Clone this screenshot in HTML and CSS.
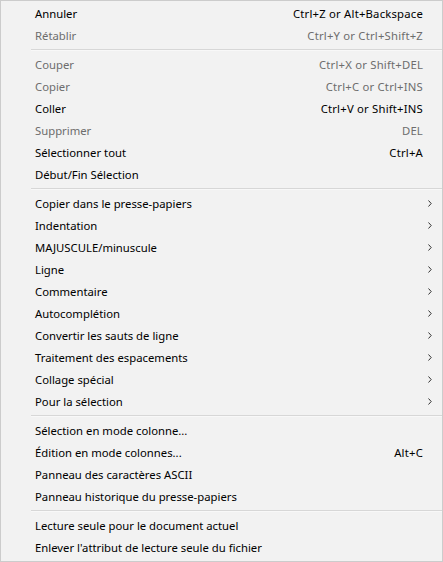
FILE: index.html
```html
<!DOCTYPE html>
<html lang="fr">
<head>
<meta charset="utf-8">
<title>Menu</title>
<link rel="stylesheet" href="styles.css">
</head>
<body>
<div class="menu">
  <div class="item"><span class="label">Annuler</span><span class="key">Ctrl+Z or Alt+Backspace</span><span class="arr"></span></div>
  <div class="item off"><span class="label">Rétablir</span><span class="key">Ctrl+Y or Ctrl+Shift+Z</span><span class="arr"></span></div>
  <div class="sep"></div>
  <div class="item off"><span class="label">Couper</span><span class="key">Ctrl+X or Shift+DEL</span><span class="arr"></span></div>
  <div class="item off"><span class="label">Copier</span><span class="key">Ctrl+C or Ctrl+INS</span><span class="arr"></span></div>
  <div class="item"><span class="label">Coller</span><span class="key">Ctrl+V or Shift+INS</span><span class="arr"></span></div>
  <div class="item off"><span class="label">Supprimer</span><span class="key">DEL</span><span class="arr"></span></div>
  <div class="item"><span class="label">Sélectionner tout</span><span class="key">Ctrl+A</span><span class="arr"></span></div>
  <div class="item"><span class="label">Début/Fin Sélection</span><span class="key"></span><span class="arr"></span></div>
  <div class="sep"></div>
  <div class="item"><span class="label">Copier dans le presse-papiers</span><span class="key"></span><span class="arr"><svg viewBox="0 0 4 7" width="4" height="7"><path d="M0.5 0.5 L3.2 3.5 L0.5 6.5" fill="none" stroke="#333" stroke-width="1"/></svg></span></div>
  <div class="item"><span class="label">Indentation</span><span class="key"></span><span class="arr"><svg viewBox="0 0 4 7" width="4" height="7"><path d="M0.5 0.5 L3.2 3.5 L0.5 6.5" fill="none" stroke="#333" stroke-width="1"/></svg></span></div>
  <div class="item"><span class="label">MAJUSCULE/minuscule</span><span class="key"></span><span class="arr"><svg viewBox="0 0 4 7" width="4" height="7"><path d="M0.5 0.5 L3.2 3.5 L0.5 6.5" fill="none" stroke="#333" stroke-width="1"/></svg></span></div>
  <div class="item"><span class="label">Ligne</span><span class="key"></span><span class="arr"><svg viewBox="0 0 4 7" width="4" height="7"><path d="M0.5 0.5 L3.2 3.5 L0.5 6.5" fill="none" stroke="#333" stroke-width="1"/></svg></span></div>
  <div class="item"><span class="label">Commentaire</span><span class="key"></span><span class="arr"><svg viewBox="0 0 4 7" width="4" height="7"><path d="M0.5 0.5 L3.2 3.5 L0.5 6.5" fill="none" stroke="#333" stroke-width="1"/></svg></span></div>
  <div class="item"><span class="label">Autocomplétion</span><span class="key"></span><span class="arr"><svg viewBox="0 0 4 7" width="4" height="7"><path d="M0.5 0.5 L3.2 3.5 L0.5 6.5" fill="none" stroke="#333" stroke-width="1"/></svg></span></div>
  <div class="item"><span class="label">Convertir les sauts de ligne</span><span class="key"></span><span class="arr"><svg viewBox="0 0 4 7" width="4" height="7"><path d="M0.5 0.5 L3.2 3.5 L0.5 6.5" fill="none" stroke="#333" stroke-width="1"/></svg></span></div>
  <div class="item"><span class="label">Traitement des espacements</span><span class="key"></span><span class="arr"><svg viewBox="0 0 4 7" width="4" height="7"><path d="M0.5 0.5 L3.2 3.5 L0.5 6.5" fill="none" stroke="#333" stroke-width="1"/></svg></span></div>
  <div class="item"><span class="label">Collage spécial</span><span class="key"></span><span class="arr"><svg viewBox="0 0 4 7" width="4" height="7"><path d="M0.5 0.5 L3.2 3.5 L0.5 6.5" fill="none" stroke="#333" stroke-width="1"/></svg></span></div>
  <div class="item"><span class="label">Pour la sélection</span><span class="key"></span><span class="arr"><svg viewBox="0 0 4 7" width="4" height="7"><path d="M0.5 0.5 L3.2 3.5 L0.5 6.5" fill="none" stroke="#333" stroke-width="1"/></svg></span></div>
  <div class="sep"></div>
  <div class="item"><span class="label">Sélection en mode colonne...</span><span class="key"></span><span class="arr"></span></div>
  <div class="item"><span class="label">Édition en mode colonnes...</span><span class="key">Alt+C</span><span class="arr"></span></div>
  <div class="item"><span class="label">Panneau des caractères ASCII</span><span class="key"></span><span class="arr"></span></div>
  <div class="item"><span class="label">Panneau historique du presse-papiers</span><span class="key"></span><span class="arr"></span></div>
  <div class="sep"></div>
  <div class="item"><span class="label">Lecture seule pour le document actuel</span><span class="key"></span><span class="arr"></span></div>
  <div class="item"><span class="label">Enlever l'attribut de lecture seule du fichier</span><span class="key"></span><span class="arr"></span></div>
</div>
</body>
</html>
```
FILE: styles.css
```css
html, body {
  margin: 0;
  padding: 0;
  background: #f0f0f0;
}
.menu {
  box-sizing: border-box;
  width: 443px;
  height: 562px;
  background: #f2f2f2;
  border: 1px solid #cccccc;
  padding: 1px 0 3px 0;
  font-family: "Noto Sans", "Liberation Sans", sans-serif;
  font-size: 11.3px;
  color: #000;
}
.item {
  display: flex;
  align-items: center;
  height: 22px;
  padding-left: 34px;
}
.item.off {
  color: #6d6d6d;
}
.label {
  flex: 1;
  white-space: nowrap;
}
.key {
  white-space: nowrap;
  letter-spacing: 0.2px;
}
.arr {
  width: 19px;
  flex: none;
  display: flex;
  align-items: center;
  padding-left: 5px;
  box-sizing: border-box;
}
.arr svg {
  display: block;
}
.sep {
  height: 1px;
  margin: 3px 0 3px 30px;
  background: #d7d7d7;
  border-bottom: 1px solid #f8f8f8;
  margin-bottom: 2px;
}
```
